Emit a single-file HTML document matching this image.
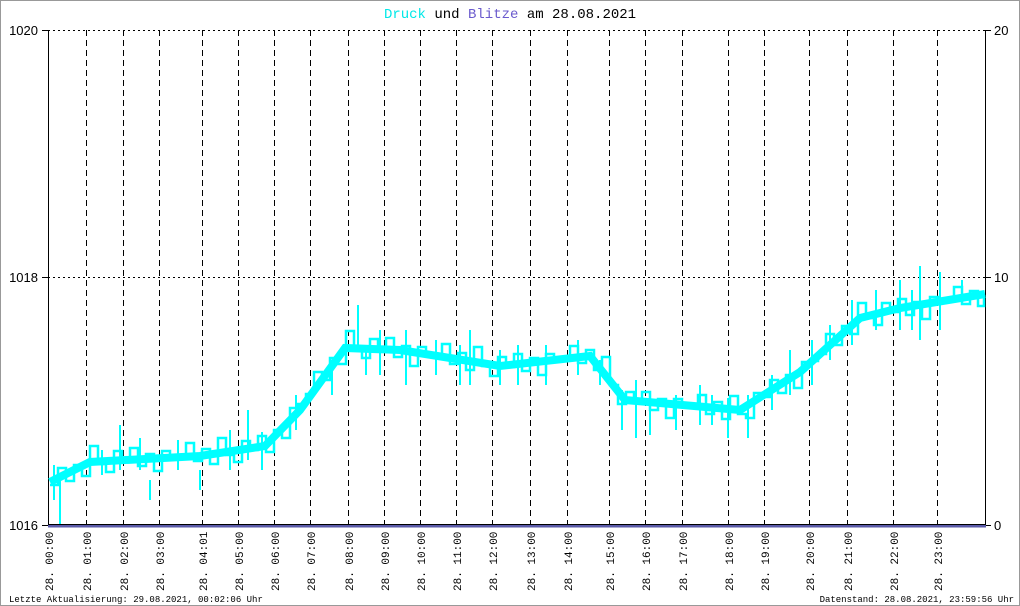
<!DOCTYPE html>
<html><head><meta charset="utf-8"><style>
html,body{margin:0;padding:0;background:#fff}
svg{display:block}
</style></head><body>
<svg width="1020" height="606" xmlns="http://www.w3.org/2000/svg" font-family="Liberation Mono, monospace">
<rect x="0.5" y="0.5" width="1019" height="605" fill="#fff" stroke="#999"/>
<text x="510" y="18" text-anchor="middle" font-size="14"><tspan fill="#00e8e8">Druck</tspan> <tspan fill="#000">und</tspan> <tspan fill="#6a5acd">Blitze</tspan> <tspan fill="#000">am 28.08.2021</tspan></text>
<g stroke="#000" stroke-width="1" stroke-dasharray="2,3">
<line x1="48" y1="30.5" x2="985" y2="30.5"/>
<line x1="48" y1="277.5" x2="985" y2="277.5"/>
</g>
<g stroke="#000" stroke-width="1" stroke-dasharray="6,4">
<line x1="86.5" y1="30" x2="86.5" y2="525"/><line x1="123.5" y1="30" x2="123.5" y2="525"/><line x1="159.5" y1="30" x2="159.5" y2="525"/><line x1="202.5" y1="30" x2="202.5" y2="525"/><line x1="238.5" y1="30" x2="238.5" y2="525"/><line x1="274.5" y1="30" x2="274.5" y2="525"/><line x1="310.5" y1="30" x2="310.5" y2="525"/><line x1="348.5" y1="30" x2="348.5" y2="525"/><line x1="384.5" y1="30" x2="384.5" y2="525"/><line x1="420.5" y1="30" x2="420.5" y2="525"/><line x1="456.5" y1="30" x2="456.5" y2="525"/><line x1="492.5" y1="30" x2="492.5" y2="525"/><line x1="530.5" y1="30" x2="530.5" y2="525"/><line x1="567.5" y1="30" x2="567.5" y2="525"/><line x1="609.5" y1="30" x2="609.5" y2="525"/><line x1="645.5" y1="30" x2="645.5" y2="525"/><line x1="682.5" y1="30" x2="682.5" y2="525"/><line x1="728.5" y1="30" x2="728.5" y2="525"/><line x1="764.5" y1="30" x2="764.5" y2="525"/><line x1="809.5" y1="30" x2="809.5" y2="525"/><line x1="847.5" y1="30" x2="847.5" y2="525"/><line x1="893.5" y1="30" x2="893.5" y2="525"/><line x1="937.5" y1="30" x2="937.5" y2="525"/>
</g>
<g stroke="#000" stroke-width="1">
<line x1="48.5" y1="30" x2="48.5" y2="526"/>
<line x1="985.5" y1="30" x2="985.5" y2="526"/>
<line x1="42" y1="30.5" x2="48" y2="30.5"/><line x1="42" y1="277.5" x2="48" y2="277.5"/><line x1="42" y1="525.5" x2="48" y2="525.5"/>
<line x1="985" y1="30.5" x2="991" y2="30.5"/><line x1="985" y1="277.5" x2="991" y2="277.5"/><line x1="985" y1="525.5" x2="991" y2="525.5"/>
</g>
<polyline fill="none" stroke="#00ffff" stroke-width="8" stroke-linejoin="miter" points="50,482 90,462 200,456 265,446 300,410 345,348 400,350 500,366 590,356 625,400 740,410 800,372 860,318 900,308 985,294"/>
<path fill="none" stroke="#00ffff" stroke-width="2.5" d="M50 485 H58 V468 H66 V481 H74 V465 H82 V476 H90 V446 H98 V464 H106 V472 H114 V451 H122 V461 H130 V448 H138 V466 H146 V454 H154 V471 H162 V451 H170 V456 H178 V456 H186 V443 H194 V461 H202 V449 H210 V464 H218 V438 H226 V455 H234 V462 H242 V441 H250 V450 H258 V436 H266 V452 H274 V430 H282 V438 H290 V408 H298 V404 H306 V394 H314 V372 H322 V380 H330 V358 H338 V364 H346 V331 H354 V350 H362 V358 H370 V339 H378 V350 H386 V338 H394 V357 H402 V346 H410 V366 H418 V347 H426 V354 H434 V355 H442 V344 H450 V364 H458 V353 H466 V370 H474 V347 H482 V366 H490 V376 H498 V357 H506 V367 H514 V354 H522 V371 H530 V358 H538 V375 H546 V354 H554 V359 H562 V359 H570 V346 H578 V363 H586 V350 H594 V370 H602 V357 H610 V385 H618 V404 H626 V392 H634 V403 H642 V392 H650 V410 H658 V399 H666 V418 H674 V399 H682 V405 H690 V406 H698 V395 H706 V414 H714 V402 H722 V419 H730 V396 H738 V414 H746 V418 H754 V393 H762 V397 H770 V380 H778 V393 H786 V375 H794 V388 H802 V362 H810 V361 H818 V354 H826 V334 H834 V345 H842 V326 H850 V334 H858 V303 H866 V318 H874 V325 H882 V303 H890 V312 H898 V299 H906 V315 H914 V302 H922 V319 H930 V297 H938 V302 H946 V301 H954 V287 H962 V304 H970 V291 H978 V306 H984 V295"/>
<path fill="none" stroke="#00ffff" stroke-width="2" d="M60 475 V525 M120 425 V470 M150 480 V500 M200 470 V490 M248 410 V460 M358 305 V345 M380 330 V375 M470 330 V385 M636 380 V438 M728 398 V438 M920 266 V340 M940 272 V330 M54 465 V500 M102 450 V475 M140 438 V470 M178 440 V470 M230 430 V470 M262 432 V470 M296 395 V430 M332 360 V395 M366 345 V375 M406 330 V385 M436 340 V375 M460 345 V385 M500 350 V385 M518 345 V385 M546 345 V385 M578 340 V375 M600 360 V385 M622 390 V430 M650 395 V435 M676 395 V430 M700 385 V425 M712 395 V425 M748 395 V438 M772 375 V410 M790 350 V395 M812 340 V385 M830 325 V360 M852 300 V345 M876 290 V330 M900 280 V330 M912 290 V330 M962 280 V300"/>
<rect x="48" y="524.5" width="938" height="3" fill="#5a5aa8"/>
<line x1="48" y1="524.5" x2="986" y2="524.5" stroke="#000" stroke-width="1"/>
<g font-family="Liberation Sans, sans-serif" font-size="13" fill="#000">
<text x="38" y="35" text-anchor="end">1020</text>
<text x="38" y="282" text-anchor="end">1018</text>
<text x="38" y="530" text-anchor="end">1016</text>
<text x="994" y="35">20</text>
<text x="994" y="282">10</text>
<text x="994" y="530">0</text>
</g>
<g font-size="11" fill="#000">
<text transform="translate(53,591) rotate(-90)">28. 00:00</text>
<text transform="translate(91,591) rotate(-90)">28. 01:00</text>
<text transform="translate(128,591) rotate(-90)">28. 02:00</text>
<text transform="translate(164,591) rotate(-90)">28. 03:00</text>
<text transform="translate(207,591) rotate(-90)">28. 04:01</text>
<text transform="translate(243,591) rotate(-90)">28. 05:00</text>
<text transform="translate(279,591) rotate(-90)">28. 06:00</text>
<text transform="translate(315,591) rotate(-90)">28. 07:00</text>
<text transform="translate(353,591) rotate(-90)">28. 08:00</text>
<text transform="translate(389,591) rotate(-90)">28. 09:00</text>
<text transform="translate(425,591) rotate(-90)">28. 10:00</text>
<text transform="translate(461,591) rotate(-90)">28. 11:00</text>
<text transform="translate(497,591) rotate(-90)">28. 12:00</text>
<text transform="translate(535,591) rotate(-90)">28. 13:00</text>
<text transform="translate(572,591) rotate(-90)">28. 14:00</text>
<text transform="translate(614,591) rotate(-90)">28. 15:00</text>
<text transform="translate(650,591) rotate(-90)">28. 16:00</text>
<text transform="translate(687,591) rotate(-90)">28. 17:00</text>
<text transform="translate(733,591) rotate(-90)">28. 18:00</text>
<text transform="translate(769,591) rotate(-90)">28. 19:00</text>
<text transform="translate(814,591) rotate(-90)">28. 20:00</text>
<text transform="translate(852,591) rotate(-90)">28. 21:00</text>
<text transform="translate(898,591) rotate(-90)">28. 22:00</text>
<text transform="translate(942,591) rotate(-90)">28. 23:00</text>
</g>
<g font-size="9" fill="#000">
<text x="9" y="602">Letzte Aktualisierung: 29.08.2021, 00:02:06 Uhr</text>
<text x="1014" y="602" text-anchor="end">Datenstand: 28.08.2021, 23:59:56 Uhr</text>
</g>
</svg>
</body></html>
